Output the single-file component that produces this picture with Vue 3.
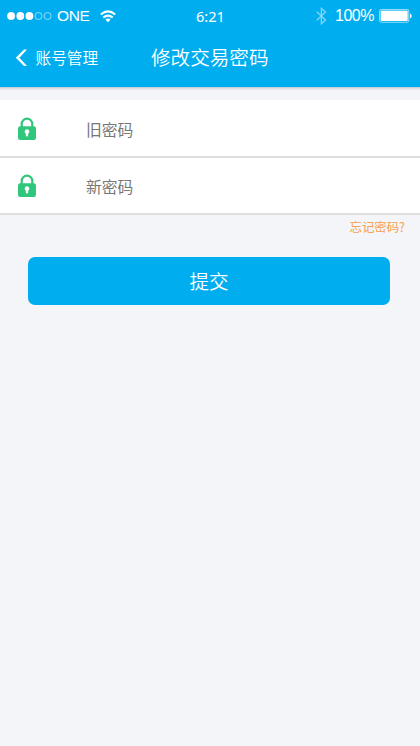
<script setup>
import { ref } from 'vue'

const fields = ref([
  { id: 'old', label: '旧密码', value: '' },
  { id: 'new', label: '新密码', value: '' },
])
</script>

<template>
  <main class="screen">
    <header class="header">
      <div class="status">
        <svg class="signal" width="46" height="10" viewBox="0 0 46 10">
          <circle cx="4.1" cy="5" r="3.9" fill="#fff" />
          <circle cx="13.3" cy="5" r="3.9" fill="#fff" />
          <circle cx="22.4" cy="5" r="3.9" fill="#fff" />
          <circle cx="31.6" cy="5" r="3.5" fill="none" stroke="#b5e6fb" stroke-width=".8" />
          <circle cx="40.6" cy="5" r="3.5" fill="none" stroke="#b5e6fb" stroke-width=".8" />
        </svg>
        <span class="carrier">ONE</span>
        <svg class="wifi" width="16" height="13" viewBox="0 0 16 13">
          <g fill="none" stroke="#fff" stroke-width="2">
            <path d="M.8 4.4Q8-1.6 15.2 4.4" />
            <path d="M3.3 7.5Q8 3.7 12.7 7.5" />
          </g>
          <path d="M5.4 9.6Q8 7.4 10.6 9.6L8 12.2Z" fill="#fff" />
        </svg>
        <span class="time">6:21</span>
        <svg class="bluetooth" width="11" height="18" viewBox="0 0 11 18">
          <path d="M.8 4.8L9.5 13L5.4 16.8V1.4L9.5 5L.8 13.2" fill="none" stroke="#83d5f7" stroke-width="1.3" />
        </svg>
        <span class="percent">100%</span>
        <svg class="battery" width="33" height="14" viewBox="0 0 33 14">
          <rect x=".6" y=".6" width="29.2" height="12.6" rx="1.9" fill="#00aeef" stroke="#95dcf8" stroke-width="1.1" />
          <rect x="1.7" y="1.7" width="27" height="10.4" rx="1" fill="#fff" />
          <path d="M31 4.6Q32.7 5.2 32.7 6.9T31 9.2Z" fill="#fff" />
        </svg>
      </div>
      <nav class="nav">
        <a class="back">
          <svg width="12" height="18" viewBox="0 0 12 18">
            <path d="M9 .6H12L4.4 8.8L12 17H9L.8 8.8Z" fill="#fff" />
          </svg>
          <span>账号管理</span>
        </a>
        <h1 class="title">修改交易密码</h1>
      </nav>
    </header>

    <form class="form" @submit.prevent>
      <label v-for="field in fields" :key="field.id" class="row">
        <svg class="lock" width="18" height="24" viewBox="0 0 18 24">
          <path d="M3.7 10V6.9a5.3 5.3 0 0 1 10.6 0V10" fill="none" stroke="#30c67c" stroke-width="2.2" />
          <rect y="9.2" width="18" height="13.8" rx="2.2" fill="#30c67c" />
          <path d="M9 12.2a2.3 2.3 0 0 0-1.2 4.3V18.2a1.2 1.2 0 0 0 2.4 0V16.5a2.3 2.3 0 0 0-1.2-4.3Z" fill="#fff" />
        </svg>
        <input v-model="field.value" class="input" type="password" :placeholder="field.label" />
      </label>
      <a class="forgot">忘记密码?</a>
      <button class="submit" type="submit">提交</button>
    </form>
  </main>
</template>

<style>
body {
  background: #f3f5f9;
}
</style>

<style scoped>
.screen {
  min-height: 746px;
  background: #f3f5f9;
  font-family: 'Noto Sans CJK SC', sans-serif;
  font-weight: 400;
}
.header {
  box-sizing: border-box;
  height: 90px;
  color: #fff;
  background: linear-gradient(#00aeef 87px, #c9d0d8 87px, #c9d0d8 88px, #e0dce0 88px, #e0dce0 89px, #ebebef 89px);
}
.status {
  display: flex;
  align-items: center;
  height: 32px;
  padding-left: 7px;
  font: 400 16px/32px 'Liberation Sans', sans-serif;
}
.signal {
  margin-right: 4px;
}
.carrier {
  width: 43px;
  font-size: 15.5px;
  letter-spacing: -0.4px;
}
.wifi {
  margin-right: 80px;
}
.time {
  width: 120px;
  font-size: 14.6px;
  line-height: 30px;
  margin-bottom: 1px;
  font-family: 'Noto Sans', sans-serif;
}
.bluetooth {
  margin-right: 8px;
}
.percent {
  width: 44px;
  letter-spacing: -0.5px;
}
.nav {
  display: grid;
  grid-template-columns: 136px 1fr;
  align-items: center;
  height: 52px;
  padding-left: 15px;
}
.back {
  display: flex;
  align-items: center;
  gap: 8.5px;
  font-size: 15.7px;
  font-weight: 350;
  line-height: 24px;
}
.title {
  margin: 0 0 2px;
  font-size: 19.6px;
  font-weight: 350;
  line-height: 28px;
}
.form {
  display: flex;
  flex-direction: column;
  padding-top: 10px;
}
.row {
  box-sizing: border-box;
  display: flex;
  align-items: center;
  height: 57px;
  padding: 1px 0 0 17.5px;
  background: #fff;
  border-bottom: 2px solid #dedede;
}
.row:first-child {
  height: 58px;
}
.lock {
  margin-right: 50.5px;
}
.input {
  flex: 1;
  min-width: 0;
  padding: 2px 0 0;
  border: 0;
  outline: 0;
  background: none;
  font: inherit;
  font-size: 15.8px;
  line-height: 24px;
}
.input::placeholder {
  color: #777;
  opacity: 1;
}
.forgot {
  align-self: flex-end;
  margin: 3px 15px 0 0;
  color: #f9a04f;
  font-size: 12.4px;
  line-height: 18px;
}
.submit {
  height: 48px;
  margin: 21px 30px 0 28px;
  padding: 0 0 2px;
  border: 0;
  border-radius: 7px;
  color: #fff;
  background: #00aeef;
  font: inherit;
  font-size: 19.6px;
  font-weight: 350;
}
</style>
